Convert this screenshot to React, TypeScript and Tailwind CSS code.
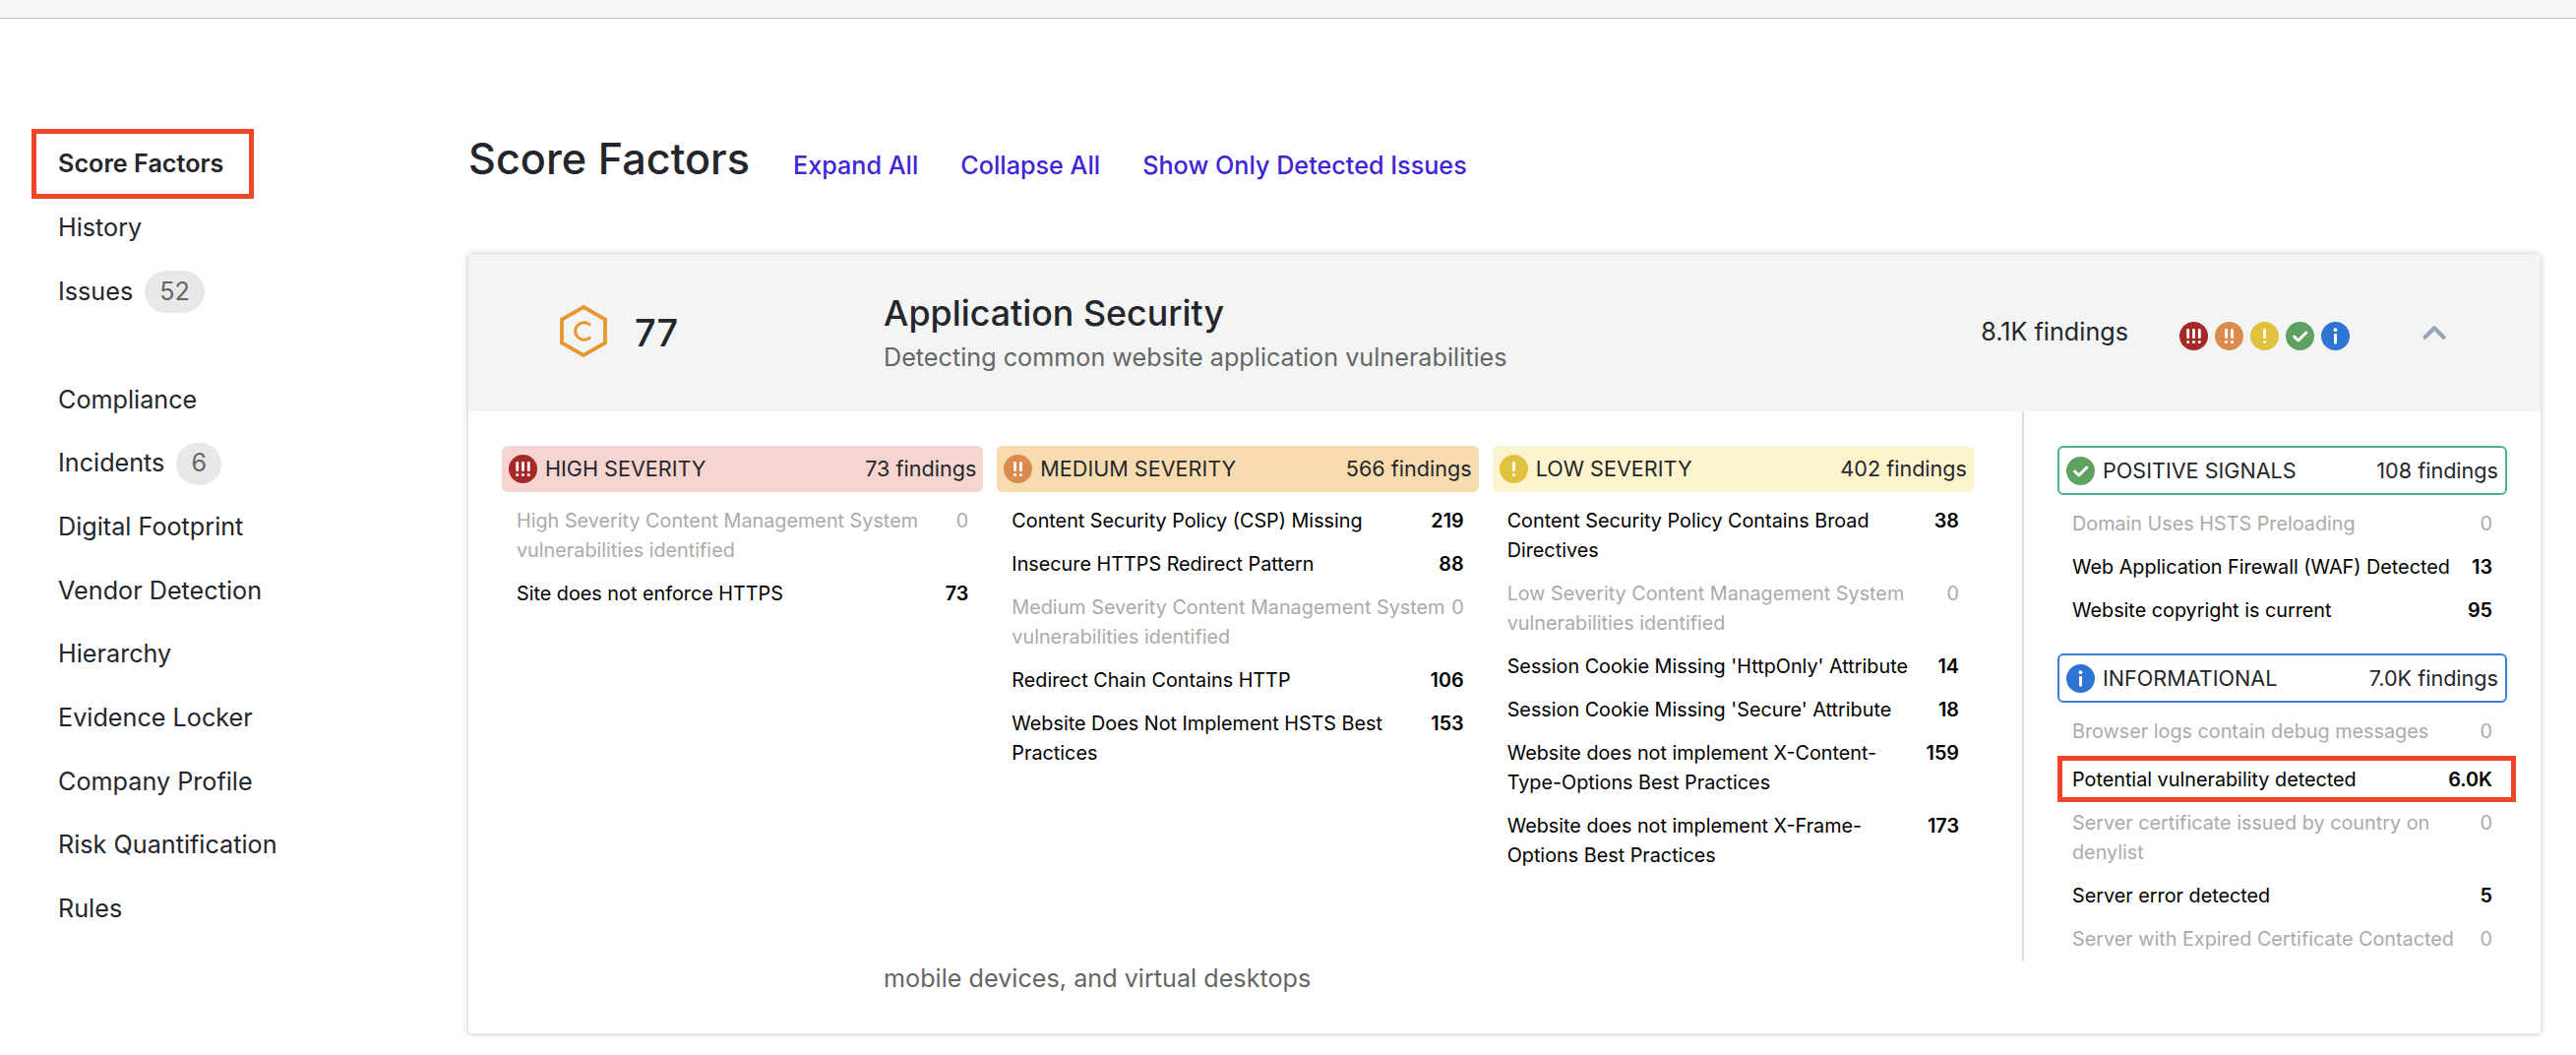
import { ChevronUp } from "lucide-react";

type Row = { label: string; count: string };

const font = { fontFamily: "Inter, sans-serif" };

// nav on the left
const navTop = [
  { label: "Score Factors", active: true },
  { label: "History" },
  { label: "Issues", badge: "52" },
];
const navBottom = [
  { label: "Compliance" },
  { label: "Incidents", badge: "6" },
  { label: "Digital Footprint" },
  { label: "Vendor Detection" },
  { label: "Hierarchy" },
  { label: "Evidence Locker" },
  { label: "Company Profile" },
  { label: "Risk Quantification" },
  { label: "Rules" },
];

const high: Row[] = [
  { label: "High Severity Content Management System vulnerabilities identified", count: "0" },
  { label: "Site does not enforce HTTPS", count: "73" },
];
const medium: Row[] = [
  { label: "Content Security Policy (CSP) Missing", count: "219" },
  { label: "Insecure HTTPS Redirect Pattern", count: "88" },
  { label: "Medium Severity Content Management System vulnerabilities identified", count: "0" },
  { label: "Redirect Chain Contains HTTP", count: "106" },
  { label: "Website Does Not Implement HSTS Best Practices", count: "153" },
];
const low: Row[] = [
  { label: "Content Security Policy Contains Broad Directives", count: "38" },
  { label: "Low Severity Content Management System vulnerabilities identified", count: "0" },
  { label: "Session Cookie Missing 'HttpOnly' Attribute", count: "14" },
  { label: "Session Cookie Missing 'Secure' Attribute", count: "18" },
  { label: "Website does not implement X-Content-Type-Options Best Practices", count: "159" },
  { label: "Website does not implement X-Frame-Options Best Practices", count: "173" },
];
const positive: Row[] = [
  { label: "Domain Uses HSTS Preloading", count: "0" },
  { label: "Web Application Firewall (WAF) Detected", count: "13" },
  { label: "Website copyright is current", count: "95" },
];
const info: Row[] = [
  { label: "Browser logs contain debug messages", count: "0" },
  { label: "Potential vulnerability detected", count: "6.0K" },
  { label: "Server certificate issued by country on denylist", count: "0" },
  { label: "Server error detected", count: "5" },
  { label: "Server with Expired Certificate Contacted", count: "0" },
];

function Bang({ x }: { x: number }) {
  return (
    <g fill="#fff">
      <rect x={x - 1.4} y="7" width="2.8" height="10" rx="1" />
      <circle cx={x} cy="20.5" r="1.6" />
    </g>
  );
}

function SevIcon({ kind }: { kind: "high" | "medium" | "low" | "good" | "info" }) {
  const fills = { high: "#a52a27", medium: "#da8b4d", low: "#e2c13f", good: "#5fa161", info: "#2e75d3" };
  return (
    <svg viewBox="0 0 29 29" className="w-[29px] h-[29px] shrink-0">
      <circle cx="14.5" cy="14.5" r="14.5" fill={fills[kind]} />
      {kind === "high" && (
        <>
          <Bang x={8.7} />
          <Bang x={14.5} />
          <Bang x={20.3} />
        </>
      )}
      {kind === "medium" && (
        <>
          <Bang x={11.5} />
          <Bang x={17.5} />
        </>
      )}
      {kind === "low" && <Bang x={14.5} />}
      {kind === "good" && (
        <path d="M8.5 15 L12.8 19 L20.8 11" fill="none" stroke="#fff" strokeWidth="3" strokeLinecap="round" strokeLinejoin="round" />
      )}
      {kind === "info" && (
        <g fill="#fff">
          <circle cx="14.5" cy="8.2" r="1.9" />
          <rect x="13" y="12" width="3" height="10.5" rx="0.8" />
        </g>
      )}
    </svg>
  );
}

function ScoreHex() {
  return (
    <svg viewBox="0 0 48 53" className="w-[48px] h-[53px] shrink-0 -mt-[3px]">
      <path d="M24 2 L46 14.5 L46 38.5 L24 51 L2 38.5 L2 14.5 Z" fill="none" stroke="#e8962f" strokeWidth="3.8" />
      <path d="M31 20.5 A 8.8 8.8 0 1 0 31 32.5" fill="none" stroke="#e8962f" strokeWidth="3" />
    </svg>
  );
}

function FindingRow({ row, boxed }: { row: Row; boxed?: boolean }) {
  const empty = row.count === "0";
  return (
    <div
      className={`relative flex justify-between gap-[4px] px-[15px] text-[19.8px] leading-[30px] ${
        empty ? "text-[#aaaaaa]" : "text-black"
      } ${boxed ? "mt-[19px]" : "mt-[14px]"}`}
    >
      <span>{row.label}</span>
      <span className={`whitespace-nowrap ${empty ? "" : "font-semibold"}`}>{row.count}</span>
      {boxed && <div className="absolute -top-[9px] -bottom-[8px] left-0 -right-[9px] border-[5px] border-[#ee4428]" />}
    </div>
  );
}

function SeverityColumn({
  kind,
  title,
  findings,
  band,
  rows,
}: {
  kind: "high" | "medium" | "low";
  title: string;
  findings: string;
  band: string;
  rows: Row[];
}) {
  return (
    <div>
      <div className={`flex items-center h-[47px] rounded-md px-[7px] text-[21.6px] text-[#24262b] ${band}`}>
        <SevIcon kind={kind} />
        <span className="ml-[8px] flex-1">{title}</span>
        <span>{findings}</span>
      </div>
      <div>
        {rows.map((r) => (
          <FindingRow key={r.label} row={r} />
        ))}
      </div>
    </div>
  );
}

function SignalBox({ kind, title, findings, border }: { kind: "good" | "info"; title: string; findings: string; border: string }) {
  return (
    <div className={`flex items-center h-[50px] rounded-md border-2 px-[7px] text-[21.6px] text-[#24262b] ${border}`}>
      <SevIcon kind={kind} />
      <span className="ml-[8px] flex-1">{title}</span>
      <span>{findings}</span>
    </div>
  );
}

function NavItem({ label, active, badge }: { label: string; active?: boolean; badge?: string }) {
  return (
    <div className={`relative flex items-center h-[64.7px] pl-[59px] text-[25.2px] text-[#24262b] ${active ? "font-semibold" : ""}`}>
      <span>{label}</span>
      {badge && (
        <span className="ml-[12px] px-[15px] h-[43px] flex items-center rounded-full bg-[#e8e8e8] text-[#666666]">{badge}</span>
      )}
      {active && <div className="absolute left-[32px] top-[-4px] w-[226px] h-[71px] border-[5px] border-[#ee4428]" />}
    </div>
  );
}

export default function App() {
  return (
    <div className="w-[2618px] h-[1072px] overflow-hidden bg-white" style={font}>
      <div className="h-[19px] bg-[#f8f8f8] border-b border-[#bdbdbd]" />
      <div className="flex">
        {/* sidebar */}
        <div className="w-[476px] shrink-0 pt-[116px]">
          {navTop.map((n) => (
            <NavItem key={n.label} {...n} />
          ))}
          <div className="h-[45px]" />
          {navBottom.map((n) => (
            <NavItem key={n.label} {...n} />
          ))}
        </div>

        {/* main */}
        <div className="w-[2106px]">
          <div className="flex items-baseline h-[239px] pt-[114px]">
            <h1 className="text-[43.2px] leading-[56px] font-medium text-[#24262b]">Score Factors</h1>
            <div className="flex gap-[43px] ml-[44px] text-[25.2px] font-medium text-[#3f25d6]">
              <a>Expand All</a>
              <a>Collapse All</a>
              <a>Show Only Detected Issues</a>
            </div>
          </div>

          <div className="h-[792px] rounded-[4px] shadow-[0_0_6px_rgba(0,0,0,0.25)]">
            {/* card header */}
            <div className="flex items-center h-[160px] bg-[#f3f5f4] pl-[93px] pr-[97px]">
              <div className="flex items-center w-[329px]">
                <ScoreHex />
                <span className="ml-[28px] text-[38px] font-medium text-[#24262b]">77</span>
              </div>
              <div className="flex-1 mt-[3px]">
                <div className="text-[35.8px] leading-[46px] font-medium text-[#24262b]">Application Security</div>
                <div className="text-[25.2px] leading-[44px] text-[#666666]">Detecting common website application vulnerabilities</div>
              </div>
              <span className="text-[25.2px] text-[#24262b]">8.1K findings</span>
              <div className="flex gap-[7px] ml-[52px] mt-[6px]">
                <SevIcon kind="high" />
                <SevIcon kind="medium" />
                <SevIcon kind="low" />
                <SevIcon kind="good" />
                <SevIcon kind="info" />
              </div>
              <ChevronUp className="w-[38px] h-[38px] ml-[67px] -mr-[8px] text-[#98a3bd]" strokeWidth={2.6} />
            </div>

            {/* card body */}
            <div className="flex h-[559px]">
              <div className="flex-1 grid grid-cols-3 gap-[14px] pl-[34px] pr-[49px] pt-[35px] content-start">
                <SeverityColumn kind="high" title="HIGH SEVERITY" findings="73 findings" band="bg-[#f6d4cf]" rows={high} />
                <SeverityColumn kind="medium" title="MEDIUM SEVERITY" findings="566 findings" band="bg-[#f8dcb0]" rows={medium} />
                <SeverityColumn kind="low" title="LOW SEVERITY" findings="402 findings" band="bg-[#fdf3cd]" rows={low} />
              </div>
              <div className="w-[527px] shrink-0 border-l-2 border-[#d9deea] px-[34px] pt-[35px]">
                <SignalBox kind="good" title="POSITIVE SIGNALS" findings="108 findings" border="border-[#4fb093]" />
                {positive.map((r) => (
                  <FindingRow key={r.label} row={r} />
                ))}
                <div className="h-[29px]" />
                <SignalBox kind="info" title="INFORMATIONAL" findings="7.0K findings" border="border-[#3d7fd5]" />
                {info.map((r) => (
                  <FindingRow key={r.label} row={r} boxed={r.count === "6.0K"} />
                ))}
              </div>
            </div>
            <div className="pl-[422px] pt-[1px] text-[25.2px] leading-[32px] text-[#666666]">mobile devices, and virtual desktops</div>
          </div>
        </div>
      </div>
    </div>
  );
}
